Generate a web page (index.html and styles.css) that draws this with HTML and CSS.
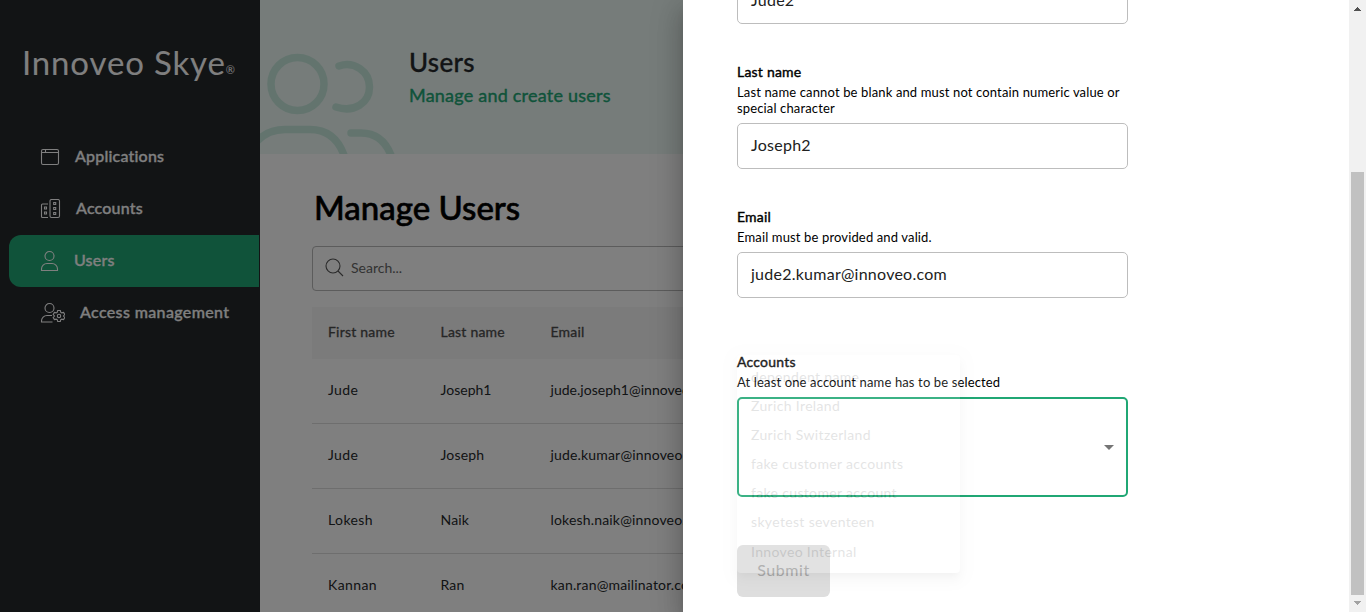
FILE: index.html
```html
<!DOCTYPE html>
<html lang="en">
<head>
<meta charset="utf-8">
<title>Innoveo Skye - Users</title>
<link rel="stylesheet" href="styles.css">
</head>
<body>
<div class="app">
  <aside class="sidebar">
    <div class="brand"><span class="brand-name">Innoveo Skye</span><span class="brand-mark">®</span></div>
    <nav class="nav">
      <a class="nav-item">
        <svg class="nav-icon" width="20" height="20" viewBox="0 0 20 20"><rect x="1.500" y="2.500" width="17" height="15" rx="1.500"/><path d="M1.500 5.500H18.500M5.500 3V5.500"/></svg>
        <span>Applications</span>
      </a>
      <a class="nav-item">
        <svg class="nav-icon" width="21" height="20" viewBox="0 0 21 20"><path d="M8 5H2.500a1 1 0 0 0-1 1V17.500a1 1 0 0 0 1 1H8"/><rect x="10" y=".5" width="9.500" height="18" rx="1.500"/><path d="M4.500 8h2v2h-2zM4.500 13h2v2h-2zM13.700 3.500h2v2h-2zM13.700 8.500h2v2h-2zM13.700 13.500h2v2h-2z"/></svg>
        <span>Accounts</span>
      </a>
      <a class="nav-item nav-item-active">
        <svg class="nav-icon" width="19" height="22" viewBox="0 0 19 22"><circle cx="9.500" cy="6" r="4.500"/><path d="M1.500 20.500V19a5.500 5.500 0 0 1 5.500-5.500h5a5.500 5.500 0 0 1 5.500 5.500v1.500z"/></svg>
        <span>Users</span>
      </a>
      <a class="nav-item">
        <svg class="nav-icon" width="25" height="22" viewBox="0 0 25 22"><circle cx="9.500" cy="6" r="4.500"/><path d="M12 13.500H7A5.500 5.500 0 0 0 1.500 19v1h11"/><circle cx="19" cy="14" r="1.700"/><path d="M17.700 8.500h2.600l.5 1.800 1 .6 1.800-.5 1.200 2.100-1.300 1.500 1.300 1.500-1.200 2.100-1.800-.5-1 .6-.5 1.800h-2.600l-.5-1.800-1-.6-1.800.5-1.200-2.100 1.300-1.500-1.300-1.500 1.200-2.100 1.800.5 1-.6z"/></svg>
        <span class="nav-long">Access management</span>
      </a>
    </nav>
  </aside>
  <main class="main">
    <header class="banner">
      <svg class="banner-art" width="149" height="154" viewBox="0 0 149 154">
        <circle cx="37.500" cy="84" r="26.500"/>
        <path d="M79 66C94 61 109.500 71 109.500 87C109.500 103 94 113 76 107"/>
        <path d="M-8 148C0 135 12 129.500 25 129.500H50C67 129.500 79 139 85 158"/>
        <path d="M91 133H101C117 133 127 143 132 158"/>
      </svg>
      <div class="banner-text">
        <h1 class="banner-title">Users</h1>
        <p class="banner-sub">Manage and create users</p>
      </div>
    </header>
    <section class="content">
      <h2 class="page-title">Manage Users</h2>
      <div class="search">
        <svg width="19" height="19" viewBox="0 0 19 19"><circle cx="8" cy="8" r="7"/><path d="M13 13l5 5"/></svg>
        <span>Search...</span>
      </div>
      <div class="table">
        <div class="row row-head"><span>First name</span><span>Last name</span><span>Email</span></div>
        <div class="row"><span class="name">Jude</span><span class="tight">Joseph1</span><span class="tight">jude.joseph1@innoveo.com</span></div>
        <div class="row"><span class="name">Jude</span><span>Joseph</span><span>jude.kumar@innoveo.com</span></div>
        <div class="row"><span class="name">Lokesh</span><span>Naik</span><span>lokesh.naik@innoveo.com</span></div>
        <div class="row"><span class="name">Kannan</span><span>Ran</span><span>kan.ran@mailinator.com</span></div>
      </div>
    </section>
  </main>
</div>
<div class="backdrop"></div>
<div class="drawer">
  <form class="form">
    <div class="input">Jude2</div>
    <div class="field">
      <div class="label">Last name</div>
      <div class="help">Last name cannot be blank and must not contain numeric value or<br>special character</div>
      <div class="input">Joseph2</div>
    </div>
    <div class="field">
      <div class="label">Email</div>
      <div class="help">Email must be provided and valid.</div>
      <div class="input">jude2.kumar@innoveo.com</div>
    </div>
    <div class="field field-accounts">
      <div class="label">Accounts</div>
      <div class="help">At least one account name has to be selected</div>
      <div class="select"><span class="caret"></span></div>
      <div class="menu">
        <div>dependent name</div>
        <div>Zurich Ireland</div>
        <div>Zurich Switzerland</div>
        <div>fake customer accounts</div>
        <div>fake customer account</div>
        <div>skyetest seventeen</div>
        <div>Innoveo Internal</div>
      </div>
    </div>
    <div class="submit">Submit</div>
  </form>
  <div class="scrollbar">
    <svg class="arrow" width="7" height="4" viewBox="0 0 7 4"><path d="M3 0h1v1h1v1h1v1h1v1H0V3h1V2h1V1h1z"/></svg>
    <div class="thumb"></div>
    <svg class="arrow arrow-down" width="7" height="4" viewBox="0 0 7 4"><path d="M0 0h7v1H6v1H5v1H4v1H3V3H2V2H1V1H0z"/></svg>
  </div>
</div>
</body>
</html>
```
FILE: styles.css
```css
* { box-sizing: border-box; }
body { margin: 0; overflow: hidden; font-family: Lato, "Noto Sans", sans-serif; color: #000; }
h1, h2, p { margin: 0; }
.app { display: flex; width: 1366px; height: 612px; overflow: hidden; background: #fff; }

.sidebar { width: 260px; flex: none; background: #25282b; color: #fff; }
.brand { height: 131px; padding: 41px 0 0 22px; display: flex; line-height: 42px; white-space: nowrap; }
.brand-name { font-size: 33px; letter-spacing: .85px; }
.brand-mark { font-size: 11px; line-height: 58px; }
.nav { padding-left: 9px; }
.nav-item { display: flex; align-items: center; gap: 15px; height: 52px; padding-left: 31px; width: 250px; font-size: 16px; font-weight: 500; letter-spacing: .2px; -webkit-text-stroke: .3px; white-space: nowrap; border-radius: 12px 0 0 12px; }
.nav-item span { padding-bottom: 4px; }
.nav-item .nav-long { letter-spacing: .36px; }
.nav-item-active { background: #20a774; }
.nav-icon { fill: none; stroke: #fff; stroke-width: 1.1; flex: none; }

.main { flex: 1; min-width: 0; }
.banner { height: 154px; display: flex; background: #ecf8f4; }
.banner-art { flex: none; fill: none; stroke: #c6e9dd; stroke-width: 7.5; stroke-linecap: round; }
.banner-text { padding-top: 46px; white-space: nowrap; }
.banner-title { font-size: 26px; line-height: 33px; font-weight: 500; letter-spacing: .3px; color: #25282b; -webkit-text-stroke: .3px; }
.banner-sub { font-size: 18px; line-height: 32px; letter-spacing: .22px; color: #20a774; -webkit-text-stroke: .4px; }
.content { padding: 31px 0 0 52px; }
.page-title { font-size: 33px; line-height: 44px; font-weight: 500; padding-left: 2px; -webkit-text-stroke: .6px; }
.search { margin-top: 17px; height: 45px; border: 1px solid #b8b8b8; border-radius: 4px; display: flex; align-items: center; gap: 7px; padding: 0 0 2px 12px; font-size: 14px; color: #666; }
.search svg { fill: none; stroke: #555; stroke-width: 1.1; }
.table { margin-top: 16px; font-size: 14px; }
.row { display: grid; grid-template-columns: 112.500px 110px 1fr; align-items: center; height: 65px; padding: 0 0 3px 16px; border-bottom: 1px solid #ddd; color: #25282b; letter-spacing: .17px; white-space: nowrap; }
.row .name { letter-spacing: .4px; }
.row .tight { letter-spacing: .02px; }
.row-head { height: 52px; background: #f6f6f6; border: 0; color: #4c4c4c; letter-spacing: .22px; -webkit-text-stroke: .3px; }

.backdrop { position: absolute; top: 0; left: 0; width: 1366px; height: 612px; background: rgba(0, 0, 0, .5); }
.drawer { position: absolute; top: 0; left: 683px; width: 683px; height: 612px; display: flex; justify-content: space-between; background: #fff; box-shadow: 0 8px 10px -5px rgba(0,0,0,.2), 0 16px 24px 2px rgba(0,0,0,.14), 0 6px 30px 5px rgba(0,0,0,.12); }
.form { width: 445px; height: 612px; overflow: hidden; padding-left: 54px; display: flex; flex-direction: column; }
.form > * { flex: none; }
.form > .input { margin-top: -22px; }
.input { height: 46px; border: 1px solid #bdbdbd; border-radius: 5px; padding: 0 13px; line-height: 42px; font-size: 16px; letter-spacing: .25px; color: #212121; }
.field { padding-top: 38px; position: relative; }
.label { font-size: 14px; line-height: 20px; letter-spacing: .22px; color: #000; -webkit-text-stroke: .4px; }
.help { font-size: 13px; line-height: 16px; letter-spacing: .14px; margin: 2px 0 7px; white-space: nowrap; }
.field-accounts { padding-top: 54px; }
.select { height: 100px; border: 2px solid #20a774; border-radius: 5px; display: flex; align-items: center; justify-content: flex-end; padding-right: 12px; }
.caret { border: 5px solid transparent; border-top-color: #757575; border-bottom: 0; }
.menu { position: absolute; left: 0; top: 57px; width: 223px; height: 218px; padding: 7px 14px; border-radius: 4px; background: #fff; opacity: .12; font-size: 14px; line-height: 29.100px; letter-spacing: .34px; color: #25282b; box-shadow: 0 5px 5px -3px rgba(0,0,0,.2), 0 8px 10px 1px rgba(0,0,0,.14), 0 3px 14px 2px rgba(0,0,0,.12); }
.submit { margin-top: 48px; width: 93px; height: 52px; border-radius: 6px; background: #dedede; color: #a6a6a6; text-align: center; line-height: 50px; font-size: 16px; letter-spacing: .6px; }
.scrollbar { width: 17px; background: #f1f1f1; display: flex; flex-direction: column; align-items: center; padding-top: 7px; }
.arrow { fill: #505050; }
.thumb { width: 13px; height: 423px; margin: 161px 0 6px; background: #c1c1c1; }
.arrow-down { fill: #a3a3a3; }
```
